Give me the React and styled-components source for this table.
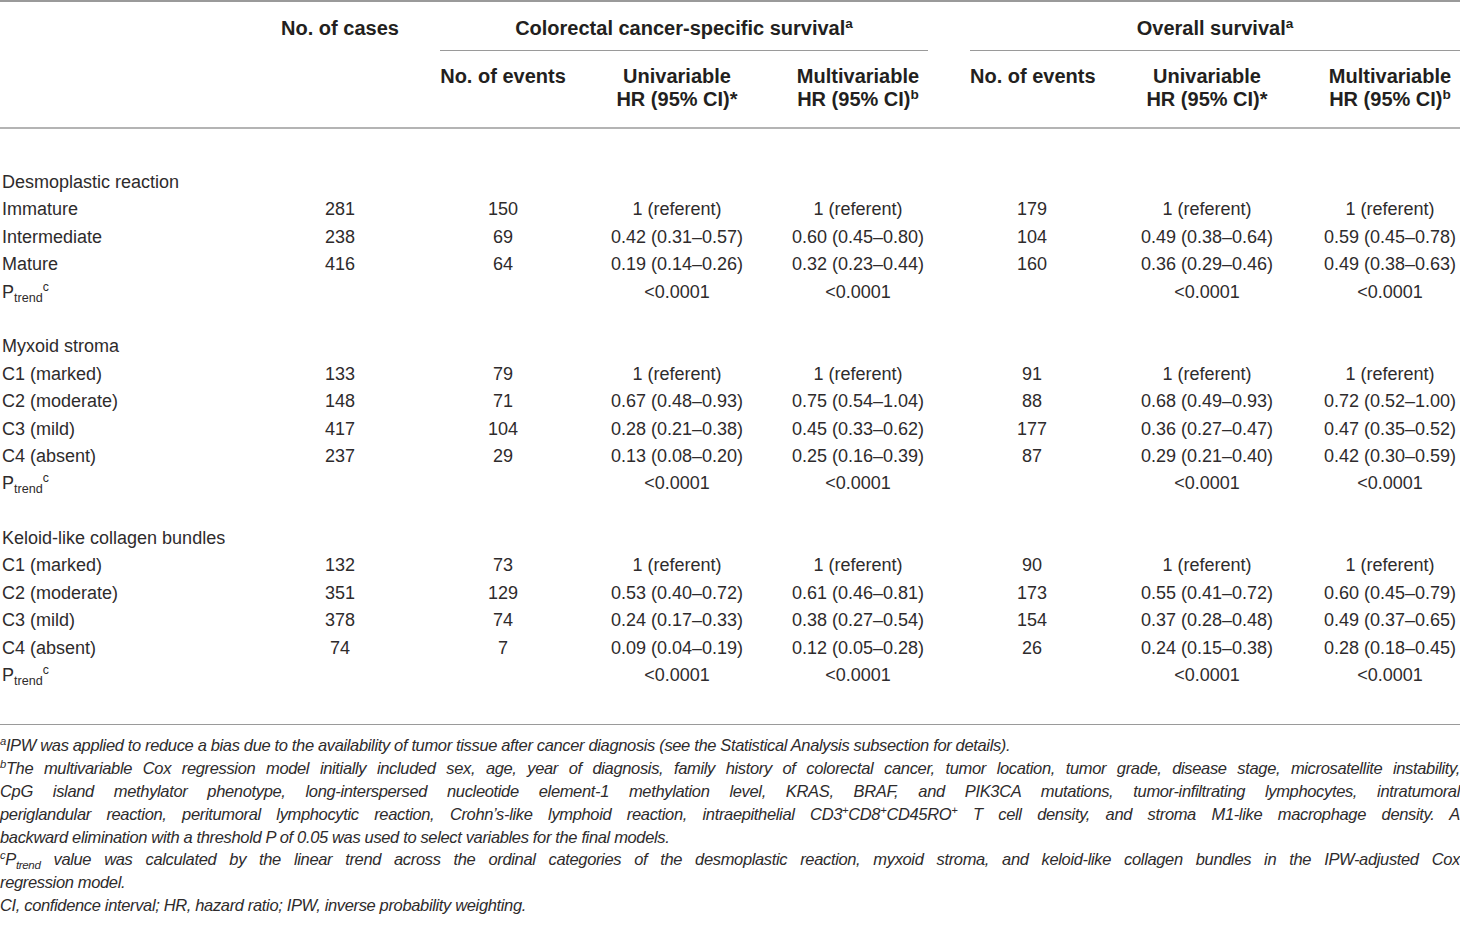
import React from 'react'
import styled, { createGlobalStyle } from 'styled-components'

const GlobalStyle = createGlobalStyle`
  html, body {
    margin: 0;
    padding: 0;
    background: #fff;
    overflow: hidden;
  }
  body {
    font-family: "Liberation Sans", Arial, sans-serif;
    color: #231f20;
  }
`

const COLS = '280px 120px 40px 126px 222px 140px 42px 124px 226px 1fr'
const DATA_COLS = [1, 2, 4, 5, 6, 8, 9, 10]

const sections = [
    {
        title: 'Desmoplastic reaction',
        rows: [
            ['Immature', '281', '150', '1 (referent)', '1 (referent)', '179', '1 (referent)', '1 (referent)'],
            ['Intermediate', '238', '69', '0.42 (0.31–0.57)', '0.60 (0.45–0.80)', '104', '0.49 (0.38–0.64)', '0.59 (0.45–0.78)'],
            ['Mature', '416', '64', '0.19 (0.14–0.26)', '0.32 (0.23–0.44)', '160', '0.36 (0.29–0.46)', '0.49 (0.38–0.63)'],
        ],
    },
    {
        title: 'Myxoid stroma',
        rows: [
            ['C1 (marked)', '133', '79', '1 (referent)', '1 (referent)', '91', '1 (referent)', '1 (referent)'],
            ['C2 (moderate)', '148', '71', '0.67 (0.48–0.93)', '0.75 (0.54–1.04)', '88', '0.68 (0.49–0.93)', '0.72 (0.52–1.00)'],
            ['C3 (mild)', '417', '104', '0.28 (0.21–0.38)', '0.45 (0.33–0.62)', '177', '0.36 (0.27–0.47)', '0.47 (0.35–0.52)'],
            ['C4 (absent)', '237', '29', '0.13 (0.08–0.20)', '0.25 (0.16–0.39)', '87', '0.29 (0.21–0.40)', '0.42 (0.30–0.59)'],
        ],
    },
    {
        title: 'Keloid-like collagen bundles',
        rows: [
            ['C1 (marked)', '132', '73', '1 (referent)', '1 (referent)', '90', '1 (referent)', '1 (referent)'],
            ['C2 (moderate)', '351', '129', '0.53 (0.40–0.72)', '0.61 (0.46–0.81)', '173', '0.55 (0.41–0.72)', '0.60 (0.45–0.79)'],
            ['C3 (mild)', '378', '74', '0.24 (0.17–0.33)', '0.38 (0.27–0.54)', '154', '0.37 (0.28–0.48)', '0.49 (0.37–0.65)'],
            ['C4 (absent)', '74', '7', '0.09 (0.04–0.19)', '0.12 (0.05–0.28)', '26', '0.24 (0.15–0.38)', '0.28 (0.18–0.45)'],
        ],
    },
]

const Page = styled.div`
    width: 1460px;
    height: 939px;
    overflow: hidden;
`

const Header = styled.div`
    display: grid;
    grid-template-columns: ${COLS};
    grid-template-rows: auto auto;
    border-top: 2px solid #9a9a9a;
    border-bottom: 2px solid #b4b4b4;
    font-weight: bold;
    font-size: 20px;
`

const HeadCell = styled.div`
    grid-column: ${p => p.$col};
    grid-row: ${p => p.$row};
    text-align: center;
    line-height: ${p => (p.$row === 1 ? '24px' : '23px')};
    padding: ${p => (p.$row === 1 ? '14px 0 10px' : '14px 0 16px')};
    white-space: nowrap;
`

const GroupTitle = styled(HeadCell)`
    border-bottom: 1px solid #9a9a9a;
`

const Sup = styled.sup`
    font-size: 0.68em;
    line-height: 0;
    vertical-align: 0.55em;
`

const Sub = styled.sub`
    font-size: 0.7em;
    line-height: 0;
    vertical-align: -0.35em;
`

const Body = styled.div`
    padding: 40px 0 35px;
    font-size: 18px;
    color: #2e2b2c;
`

const Row = styled.div`
    display: grid;
    grid-template-columns: ${COLS};
    height: 27.4px;
    line-height: 27.4px;
`

const Cell = styled.div`
    grid-column: ${p => p.$col};
    text-align: ${p => (p.$col === 1 ? 'left' : 'center')};
    padding-left: ${p => (p.$col === 1 ? '2px' : '0')};
    white-space: nowrap;
`

const Spacer = styled.div`
    height: 27.4px;
`

const Notes = styled.div`
    border-top: 1px solid #9a9a9a;
    padding-top: 9px;
    font-style: italic;
    font-size: 16.5px;
    letter-spacing: -0.35px;
    line-height: 22.8px;
    color: #2e2b2c;
`

const NoteLine = styled.span`
    display: block;
    white-space: nowrap;
    text-align: ${p => (p.$justify ? 'justify' : 'left')};
    text-align-last: ${p => (p.$justify ? 'justify' : 'auto')};
`

const PTrend = () => (
    <>P<Sub>trend</Sub><Sup>c</Sup></>
)

function Section({ title, rows, last }) {
    return (
        <>
            <Row><Cell $col={1}>{title}</Cell></Row>
            {rows.map((r, i) => (
                <Row key={i}>
                    {r.map((v, j) => <Cell key={j} $col={DATA_COLS[j]}>{v}</Cell>)}
                </Row>
            ))}
            <Row>
                <Cell $col={1}><PTrend /></Cell>
                <Cell $col={5}>&lt;0.0001</Cell>
                <Cell $col={6}>&lt;0.0001</Cell>
                <Cell $col={9}>&lt;0.0001</Cell>
                <Cell $col={10}>&lt;0.0001</Cell>
            </Row>
            {!last && <Spacer />}
        </>
    )
}

export default function App() {
    return (
        <Page>
            <GlobalStyle />
            <Header>
                <HeadCell $col={2} $row={1}>No. of cases</HeadCell>
                <GroupTitle $col="4 / 7" $row={1}>Colorectal cancer-specific survival<Sup>a</Sup></GroupTitle>
                <GroupTitle $col="8 / 11" $row={1}>Overall survival<Sup>a</Sup></GroupTitle>
                <HeadCell $col={4} $row={2}>No. of events</HeadCell>
                <HeadCell $col={5} $row={2}>Univariable<br />HR (95% CI)*</HeadCell>
                <HeadCell $col={6} $row={2}>Multivariable<br />HR (95% CI)<Sup>b</Sup></HeadCell>
                <HeadCell $col={8} $row={2}>No. of events</HeadCell>
                <HeadCell $col={9} $row={2}>Univariable<br />HR (95% CI)*</HeadCell>
                <HeadCell $col={10} $row={2}>Multivariable<br />HR (95% CI)<Sup>b</Sup></HeadCell>
            </Header>
            <Body>
                {sections.map((s, i) => (
                    <Section key={s.title} {...s} last={i === sections.length - 1} />
                ))}
            </Body>
            <Notes>
                <NoteLine><Sup>a</Sup>IPW was applied to reduce a bias due to the availability of tumor tissue after cancer diagnosis (see the Statistical Analysis subsection for details).</NoteLine>
                <NoteLine $justify><Sup>b</Sup>The multivariable Cox regression model initially included sex, age, year of diagnosis, family history of colorectal cancer, tumor location, tumor grade, disease stage, microsatellite instability,</NoteLine>
                <NoteLine $justify>CpG island methylator phenotype, long-interspersed nucleotide element-1 methylation level, KRAS, BRAF, and PIK3CA mutations, tumor-infiltrating lymphocytes, intratumoral</NoteLine>
                <NoteLine $justify>periglandular reaction, peritumoral lymphocytic reaction, Crohn’s-like lymphoid reaction, intraepithelial CD3<Sup>+</Sup>CD8<Sup>+</Sup>CD45RO<Sup>+</Sup> T cell density, and stroma M1-like macrophage density. A</NoteLine>
                <NoteLine>backward elimination with a threshold P of 0.05 was used to select variables for the final models.</NoteLine>
                <NoteLine $justify><Sup>c</Sup>P<Sub>trend</Sub> value was calculated by the linear trend across the ordinal categories of the desmoplastic reaction, myxoid stroma, and keloid-like collagen bundles in the IPW-adjusted Cox</NoteLine>
                <NoteLine>regression model.</NoteLine>
                <NoteLine>CI, confidence interval; HR, hazard ratio; IPW, inverse probability weighting.</NoteLine>
            </Notes>
        </Page>
    )
}
